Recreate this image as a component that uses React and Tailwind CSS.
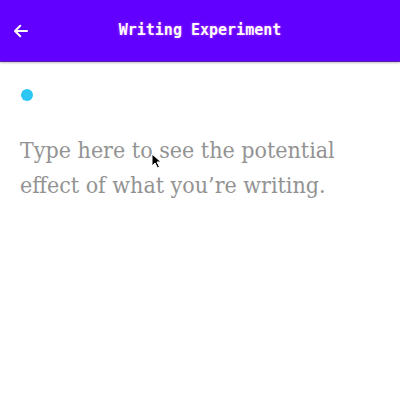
import React from 'react';

const App = () => {
  return (
    <div className="relative h-[400px] w-[400px] overflow-hidden bg-white">
      <header className="flex h-[62px] items-center border-b border-[#5a1fb0] bg-[#6200ff] px-[12px] shadow-[0_1px_2px_rgba(0,0,0,0.25)]">
        <svg width="18" height="18" viewBox="0 0 24 24" className="text-white" fill="none" stroke="currentColor" strokeWidth="2.6" strokeLinecap="round" strokeLinejoin="round">
          <path d="M20 12H5" />
          <path d="M11 5l-7 7 7 7" />
        </svg>
        <h1
          className="flex-1 pr-[18px] text-center text-[15px] font-bold text-white [font-family:'DejaVu_Sans_Mono',monospace] [text-shadow:0_0_3px_#b040ff]"
        >
          Writing Experiment
        </h1>
      </header>

      <div className="px-[20px] pt-[27px]">
        <div className="ml-[1px] h-[12px] w-[12px] rounded-full bg-[#2cc6f5]" />
        <p className="mt-[32px] text-[23px] font-light leading-[35px] text-[#939393] [font-stretch:condensed] [font-family:'DejaVu_Serif',serif]">
          Type here to see the potential effect of what you’re writing.
        </p>
      </div>

      {/* mouse pointer */}
      <svg className="absolute left-[151px] top-[153px]" width="12" height="17" viewBox="0 0 12 17">
        <path d="M1 1 L1 13 L4 10 L6.5 15 L8.5 14 L6 9 L10 9 Z" fill="#000" stroke="#fff" strokeWidth="1" />
      </svg>
    </div>
  );
};

export default App;
